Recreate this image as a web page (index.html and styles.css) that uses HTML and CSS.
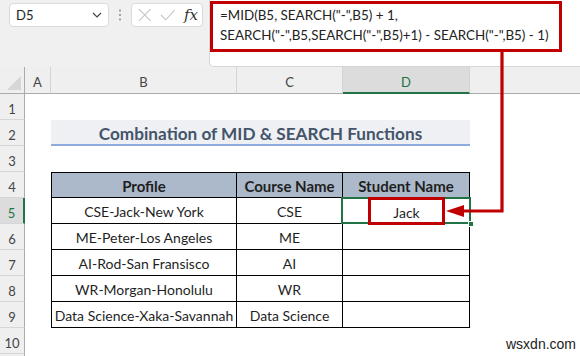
FILE: index.html
```html
<!DOCTYPE html>
<html>
<head>
<meta charset="utf-8">
<link rel="stylesheet" href="styles.css">
</head>
<body>
<div class="app">
  <div class="toolbar">
    <div class="namebox">
      <span>D5</span>
      <svg class="chev" width="10" height="6" viewBox="0 0 10 6"><path d="M1 1 L5 5 L9 1" fill="none" stroke="#444" stroke-width="1.2"/></svg>
    </div>
    <div class="vdots">
      <svg width="4" height="12" viewBox="0 0 4 12"><circle cx="2" cy="1.5" r="1" fill="#8a8a8a"/><circle cx="2" cy="6" r="1" fill="#8a8a8a"/><circle cx="2" cy="10.5" r="1" fill="#8a8a8a"/></svg>
    </div>
    <div class="fxbox">
      <svg width="14" height="14" viewBox="0 0 14 14"><path d="M1 1 L13 13 M13 1 L1 13" stroke="#c4c4c4" stroke-width="1.1"/></svg>
      <svg width="16" height="14" viewBox="0 0 16 14"><path d="M1 7 L6 12 L15 2" fill="none" stroke="#c4c4c4" stroke-width="1.1"/></svg>
      <span class="fx">fx</span>
    </div>
    <div class="formulabar">
      <div class="formula-hl">
        <div>=MID(B5, SEARCH("-",B5) + 1,</div>
        <div>SEARCH("-",B5,SEARCH("-",B5)+1) - SEARCH("-",B5) - 1)</div>
      </div>
    </div>
  </div>

  <div class="sheet">
    <!-- column headers -->
    <div class="corner"><svg width="14" height="14" viewBox="0 0 14 14"><path d="M14 0 L14 14 L0 14 Z" fill="#d6d6d6"/></svg></div>
    <div class="ch">A</div>
    <div class="ch">B</div>
    <div class="ch">C</div>
    <div class="ch sel">D</div>
    <div class="ch last"></div>

    <!-- row 1 -->
    <div class="rh">1</div><div></div><div></div><div></div><div></div><div></div>

    <!-- row 2 -->
    <div class="rh">2</div><div></div>
    <div class="title">Combination of MID &amp; SEARCH Functions</div>
    <div></div>

    <!-- row 3 -->
    <div class="rh">3</div><div></div><div></div><div></div><div></div><div></div>

    <!-- row 4 -->
    <div class="rh">4</div><div></div>
    <div class="th first top">Profile</div>
    <div class="th top">Course Name</div>
    <div class="th top">Student Name</div>
    <div></div>

    <!-- row 5 -->
    <div class="rh sel">5</div><div></div>
    <div class="td first">CSE-Jack-New York</div>
    <div class="td">CSE</div>
    <div class="td active"><span class="hl-cell">Jack</span><span class="handle"></span></div>
    <div></div>

    <!-- row 6 -->
    <div class="rh">6</div><div></div>
    <div class="td first">ME-Peter-Los Angeles</div>
    <div class="td">ME</div>
    <div class="td"></div>
    <div></div>

    <!-- row 7 -->
    <div class="rh">7</div><div></div>
    <div class="td first">AI-Rod-San Fransisco</div>
    <div class="td">AI</div>
    <div class="td"></div>
    <div></div>

    <!-- row 8 -->
    <div class="rh">8</div><div></div>
    <div class="td first">WR-Morgan-Honolulu</div>
    <div class="td">WR</div>
    <div class="td"></div>
    <div></div>

    <!-- row 9 -->
    <div class="rh">9</div><div></div>
    <div class="td first">Data Science-Xaka-Savannah</div>
    <div class="td">Data Science</div>
    <div class="td"></div>
    <div></div>

    <!-- row 10 -->
    <div class="rh">10</div><div></div><div></div><div></div><div></div><div></div>

    <!-- row 11 (only its top edge is visible) -->
    <div class="rh"></div><div></div><div></div><div></div><div></div><div></div>
  </div>

  <svg class="arrow" width="580" height="356" viewBox="0 0 580 356">
    <path d="M502 50 L502 211 L461 211" fill="none" stroke="#c00000" stroke-width="3.2"/>
    <path d="M446 211 L464 205 L464 217 Z" fill="#c00000"/>
  </svg>

  <div class="watermark">wsxdn.com</div>
</div>
</body>
</html>
```

FILE: styles.css
```css
* {
  box-sizing: border-box;
  margin: 0;
  padding: 0;
}

body {
  margin: 0;
  background: #ffffff;
  font-family: Lato, "Open Sans", sans-serif;
  color: #1f1f1f;
}

.app {
  position: relative;
  width: 580px;
  height: 356px;
  overflow: hidden;
}

/* ---------- toolbar ---------- */
.toolbar {
  height: 67px;
  background: #f0f0f0;
  display: flex;
  align-items: flex-start;
}

.namebox {
  margin: 3px 0 0 9px;
  width: 100px;
  height: 24px;
  background: #fff;
  border: 1px solid #dadada;
  border-radius: 4px;
  display: flex;
  align-items: center;
  justify-content: space-between;
  padding: 0 6px 0 6px;
  font-size: 13px;
  color: #222;
}

.vdots {
  width: 22px;
  height: 30px;
  display: flex;
  align-items: center;
  justify-content: center;
}

.fxbox {
  margin-top: 3px;
  width: 72px;
  height: 24px;
  background: #fff;
  border: 1px solid #dadada;
  border-radius: 4px;
  display: flex;
  align-items: center;
  padding: 0 4px 0 6px;
  gap: 8px;
}

.fx {
  font-family: "DejaVu Serif", "Liberation Serif", serif;
  font-style: italic;
  font-size: 15px;
  color: #333;
  margin-left: 1px;
}

.formulabar {
  margin-left: 6px;
  flex: 1;
  height: 67px;
  background: #fff;
  border-left: 1px solid #d6d6d6;
  border-bottom: 1px solid #d6d6d6;
  border-bottom-left-radius: 5px;
  padding-top: 1px;
}

.formula-hl {
  width: 352px;
  height: 51px;
  border: 3px solid #c00000;
  padding: 1px 0 0 7px;
  font-size: 13.4px;
  line-height: 20px;
  color: #222;
  white-space: nowrap;
}

/* ---------- sheet ---------- */
.sheet {
  display: grid;
  grid-template-columns: 25px 26px 186px 106px 127px 1fr;
  grid-template-rows: 27px repeat(11, 26px);
}

.corner {
  background: #efefef;
  border-right: 1px solid #ababab;
  border-bottom: 1px solid #ababab;
  display: flex;
  align-items: flex-end;
  justify-content: flex-end;
  padding: 0 3px 3px 0;
}

.ch {
  background: #efefef;
  border-bottom: 1px solid #ababab;
  border-right: 1px solid #d4d4d4;
  font-size: 13px;
  color: #444;
  display: flex;
  align-items: center;
  justify-content: center;
  padding-top: 4px;
}

.ch.sel {
  background: #dcdcdc;
  color: #217346;
  border-bottom: 2px solid #217346;
}

.ch.last {
  border-right: none;
}

.rh {
  background: #efefef;
  border-right: 1px solid #ababab;
  border-bottom: 1px solid #d6d6d6;
  font-size: 13px;
  color: #444;
  display: flex;
  align-items: center;
  justify-content: center;
  padding-top: 4px;
}

.rh.sel {
  background: #dcdcdc;
  color: #217346;
  border-right: 2px solid #217346;
}

.title {
  grid-column: 3 / 6;
  background: #eef0f3;
  border-bottom: 2px solid #8faadc;
  font-weight: 700;
  font-size: 17.2px;
  color: #44546a;
  display: flex;
  align-items: center;
  justify-content: center;
  padding-top: 2px;
}

.th,
.td {
  border-right: 1px solid #000;
  border-bottom: 1px solid #000;
  display: flex;
  align-items: center;
  justify-content: center;
  white-space: nowrap;
  padding-top: 2px;
}

.th {
  background: #acb9ca;
  font-weight: 700;
  font-size: 15px;
  color: #1f1f1f;
}

.td {
  font-size: 14px;
  color: #1f1f1f;
}

.first {
  border-left: 1px solid #000;
}

.top {
  border-top: 1px solid #000;
}

.active {
  position: relative;
}

.active::after {
  content: "";
  position: absolute;
  left: -2px;
  top: -1px;
  right: -2px;
  bottom: -1px;
  border: 2px solid #217346;
}

.hl-cell {
  position: absolute;
  left: 25px;
  top: -1px;
  width: 77px;
  height: 28px;
  border: 3px solid #c00000;
  display: flex;
  align-items: center;
  justify-content: center;
  padding-top: 2px;
  z-index: 2;
}

.handle {
  position: absolute;
  right: -5px;
  bottom: -4px;
  width: 6px;
  height: 6px;
  background: #217346;
  border: 1px solid #fff;
  z-index: 3;
}

/* ---------- overlays ---------- */
.arrow {
  position: absolute;
  left: 0;
  top: 0;
  pointer-events: none;
}

.watermark {
  position: absolute;
  left: 506px;
  top: 336px;
  font-family: "Liberation Sans", Arial, sans-serif;
  font-size: 14px;
  color: #222;
}
```
